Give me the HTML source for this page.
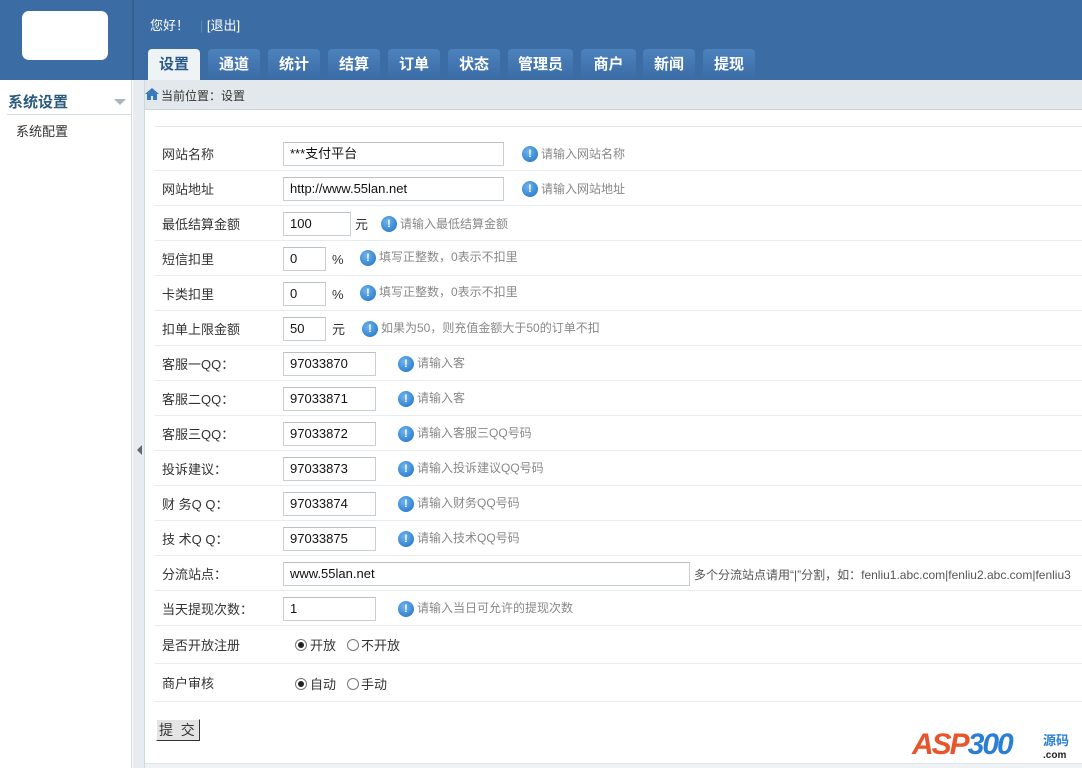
<!DOCTYPE html>
<html><head><meta charset="utf-8"><style>
*{margin:0;padding:0;box-sizing:border-box}
body{width:1082px;height:768px;overflow:hidden;font:12px "Liberation Sans","Noto Sans CJK SC",sans-serif;color:#333;background:#fff;position:relative}
#hd{position:absolute;left:0;top:0;width:1082px;height:80px;background:#3b6ca3}
#hd .sep{position:absolute;left:132px;top:0;width:2px;height:80px;background:#33608f}
#logo{position:absolute;left:22px;top:11px;width:86px;height:49px;background:#fff;border-radius:7px}
#hi{position:absolute;left:150px;top:18px;color:#fff;font-size:13px;line-height:16px}
.tab{position:absolute;top:49px;height:31px;background:linear-gradient(#4d82bd,#3a6ba5);border-radius:4px 4px 0 0;color:#fff;font-weight:bold;font-size:15px;text-align:center;line-height:31px}
.tab.on{background:#eef3f6;color:#2a5a8a}
#side{position:absolute;left:0;top:80px;width:132px;height:688px;background:#fff;border-right:1px solid #cfd9e0}
#side h3{position:absolute;left:8px;top:14px;color:#2a5a80;font-size:15px;line-height:18px}
#split{position:absolute;left:133px;top:80px;width:12px;height:688px;background:#e6ecef;border-right:1px solid #cfd8de}
#bc{position:absolute;left:145px;top:80px;width:937px;height:30px;background:#e2e8eb;border-bottom:1px solid #c9d2d8}
.row{position:absolute;left:155px;width:927px;border-bottom:1px solid #e8ecee}
.lbl{position:absolute;left:7px;font-size:13px;line-height:16px;margin-top:2px}
.inp{position:absolute;left:128px;height:24px;border:1px solid #c8cfd4;border-top-color:#b9c1c6;font-size:13px;color:#111;padding-left:6px;line-height:22px;background:#fff}
.ic{position:absolute;width:16px;height:16px;border-radius:50%;background:radial-gradient(circle at 40% 35%,#6fb4ee,#1b6fc5);color:#fff;font-weight:bold;font-size:11px;text-align:center;line-height:16px}
.tip{position:absolute;color:#888;font-size:12px;line-height:16px}
.u{position:absolute;font-size:13px;line-height:16px}
.rd{position:absolute;width:12px;height:12px;border:1px solid #777;border-radius:50%;background:#fff}
.rd.on::after{content:"";position:absolute;left:2px;top:2px;width:6px;height:6px;border-radius:50%;background:#222}
</style></head><body>
<div id="hd"><div class="sep"></div><div id="logo"></div>
<div id="hi">您好！ &nbsp; <span style="color:#5c86b5">|</span> [退出]</div>
<div class="tab on" style="left:148px;width:52px">设置</div>
<div class="tab" style="left:208px;width:52px">通道</div>
<div class="tab" style="left:268px;width:52px">统计</div>
<div class="tab" style="left:328px;width:52px">结算</div>
<div class="tab" style="left:388px;width:52px">订单</div>
<div class="tab" style="left:448px;width:52px">状态</div>
<div class="tab" style="left:508px;width:65px">管理员</div>
<div class="tab" style="left:581px;width:55px">商户</div>
<div class="tab" style="left:643px;width:52px">新闻</div>
<div class="tab" style="left:703px;width:52px">提现</div>
</div>
<div id="side"><h3>系统设置</h3><div style="position:absolute;left:114px;top:19px;border:6px solid transparent;border-top:6px solid #aab6be"></div>
<div style="position:absolute;left:7px;top:34px;width:125px;height:1px;background:#d5dee5"></div>
<div style="position:absolute;left:16px;top:44px;font-size:13px;line-height:16px">系统配置</div></div>
<div id="split"><div style="position:absolute;left:4px;top:365px;border:5px solid transparent;border-right:5px solid #666;border-left:0"></div></div>
<div id="bc"><svg style="position:absolute;left:0;top:8px" width="14" height="12" viewBox="0 0 14 12"><path d="M7 0L0 6h2v6h4V8h2v4h4V6h2z" fill="#3a7ab8"/></svg><span style="position:absolute;left:16px;top:8px;font-size:12px;line-height:16px">当前位置：设置</span></div>
<div style="position:absolute;left:155px;top:126px;width:927px;height:1px;background:#e3e8eb"></div>
<div style="position:absolute;left:145px;top:763px;width:937px;height:5px;border-top:1px solid #dfe5e8;background:#eef2f4"></div>

<div class="row" style="top:136px;height:35px"><span class="lbl" style="top:9px">网站名称</span><div class="inp" style="top:6px;width:221px">***支付平台</div><div class="ic" style="left:367px;top:10px">!</div><span class="tip" style="left:386px;top:10px">请输入网站名称</span></div>
<div class="row" style="top:171px;height:35px"><span class="lbl" style="top:9px">网站地址</span><div class="inp" style="top:6px;width:221px">http://www.55lan.net</div><div class="ic" style="left:367px;top:10px">!</div><span class="tip" style="left:386px;top:10px">请输入网站地址</span></div>
<div class="row" style="top:206px;height:35px"><span class="lbl" style="top:9px">最低结算金额</span><div class="inp" style="top:6px;width:68px">100</div><span class="u" style="left:200px;top:11px">元</span><div class="ic" style="left:226px;top:10px">!</div><span class="tip" style="left:245px;top:10px">请输入最低结算金额</span></div>
<div class="row" style="top:241px;height:35px"><span class="lbl" style="top:9px">短信扣里</span><div class="inp" style="top:6px;width:43px">0</div><span class="u" style="left:177px;top:11px">%</span><div class="ic" style="left:205px;top:9px">!</div><span class="tip" style="left:224px;top:8px">填写正整数，0表示不扣里</span></div>
<div class="row" style="top:276px;height:35px"><span class="lbl" style="top:9px">卡类扣里</span><div class="inp" style="top:6px;width:43px">0</div><span class="u" style="left:177px;top:11px">%</span><div class="ic" style="left:205px;top:9px">!</div><span class="tip" style="left:224px;top:8px">填写正整数，0表示不扣里</span></div>
<div class="row" style="top:311px;height:35px"><span class="lbl" style="top:9px">扣单上限金额</span><div class="inp" style="top:6px;width:43px">50</div><span class="u" style="left:177px;top:11px">元</span><div class="ic" style="left:207px;top:10px">!</div><span class="tip" style="left:226px;top:9px">如果为50，则充值金额大于50的订单不扣</span></div>
<div class="row" style="top:346px;height:35px"><span class="lbl" style="top:9px">客服一QQ：</span><div class="inp" style="top:6px;width:93px">97033870</div><div class="ic" style="left:243px;top:10px">!</div><span class="tip" style="left:262px;top:9px">请输入客</span></div>
<div class="row" style="top:381px;height:35px"><span class="lbl" style="top:9px">客服二QQ：</span><div class="inp" style="top:6px;width:93px">97033871</div><div class="ic" style="left:243px;top:10px">!</div><span class="tip" style="left:262px;top:9px">请输入客</span></div>
<div class="row" style="top:416px;height:35px"><span class="lbl" style="top:9px">客服三QQ：</span><div class="inp" style="top:6px;width:93px">97033872</div><div class="ic" style="left:243px;top:10px">!</div><span class="tip" style="left:262px;top:9px">请输入客服三QQ号码</span></div>
<div class="row" style="top:451px;height:35px"><span class="lbl" style="top:9px">投诉建议：</span><div class="inp" style="top:6px;width:93px">97033873</div><div class="ic" style="left:243px;top:10px">!</div><span class="tip" style="left:262px;top:9px">请输入投诉建议QQ号码</span></div>
<div class="row" style="top:486px;height:35px"><span class="lbl" style="top:9px">财 务Q Q：</span><div class="inp" style="top:6px;width:93px">97033874</div><div class="ic" style="left:243px;top:10px">!</div><span class="tip" style="left:262px;top:9px">请输入财务QQ号码</span></div>
<div class="row" style="top:521px;height:35px"><span class="lbl" style="top:9px">技 术Q Q：</span><div class="inp" style="top:6px;width:93px">97033875</div><div class="ic" style="left:243px;top:10px">!</div><span class="tip" style="left:262px;top:9px">请输入技术QQ号码</span></div>
<div class="row" style="top:556px;height:35px"><span class="lbl" style="top:9px">分流站点：</span><div class="inp" style="top:6px;width:407px">www.55lan.net</div><span class="tip" style="left:539px;top:11px;color:#555;white-space:nowrap">多个分流站点请用“|”分割，如：fenliu1.abc.com|fenliu2.abc.com|fenliu3</span></div>
<div class="row" style="top:591px;height:35px"><span class="lbl" style="top:9px">当天提现次数：</span><div class="inp" style="top:6px;width:93px">1</div><div class="ic" style="left:243px;top:10px">!</div><span class="tip" style="left:262px;top:9px">请输入当日可允许的提现次数</span></div>
<div class="row" style="top:626px;height:38px"><span class="lbl" style="top:10px">是否开放注册</span><div class="rd on" style="left:140px;top:13px"></div><span class="u" style="left:155px;top:12px">开放</span><div class="rd" style="left:192px;top:13px"></div><span class="u" style="left:206px;top:12px">不开放</span></div>
<div class="row" style="top:664px;height:38px"><span class="lbl" style="top:10px">商户审核</span><div class="rd on" style="left:140px;top:14px"></div><span class="u" style="left:155px;top:13px">自动</span><div class="rd" style="left:192px;top:14px"></div><span class="u" style="left:206px;top:13px">手动</span></div>
<div style="position:absolute;left:156px;top:719px;width:44px;height:22px;background:#e4e4e4;border:1px solid #fff;border-right-color:#333;border-bottom-color:#333;font-size:14px;line-height:20px;padding-left:2px">提&nbsp;&nbsp;交</div>
<div style="position:absolute;left:912px;top:728px;font:italic bold 30px 'Liberation Sans',sans-serif;color:#e8552a;letter-spacing:-2px">ASP<span style="color:#2a7fd4">300</span></div>
<div style="position:absolute;left:1043px;top:734px;font-weight:bold;font-size:13px;color:#2a7fd4;line-height:13px">源码<br><span style="color:#222;font-size:10px">.com</span></div>
</body></html>
